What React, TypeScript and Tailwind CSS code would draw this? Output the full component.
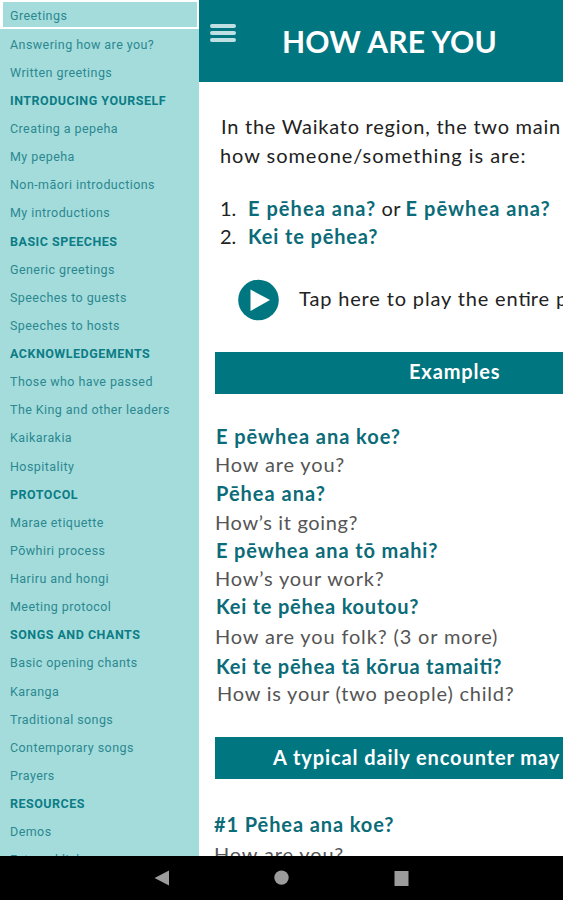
import React from 'react';

interface MenuItem {
  label: string;
  heading?: boolean;
}

interface Phrase {
  maori: React.ReactNode;
  english: string;
  maoriClass: string;
  englishClass: string;
}

const menuItems: MenuItem[] = [
  { label: 'Answering how are you?' },
  { label: 'Written greetings' },
  { label: 'INTRODUCING YOURSELF', heading: true },
  { label: 'Creating a pepeha' },
  { label: 'My pepeha' },
  { label: 'Non-māori introductions' },
  { label: 'My introductions' },
  { label: 'BASIC SPEECHES', heading: true },
  { label: 'Generic greetings' },
  { label: 'Speeches to guests' },
  { label: 'Speeches to hosts' },
  { label: 'ACKNOWLEDGEMENTS', heading: true },
  { label: 'Those who have passed' },
  { label: 'The King and other leaders' },
  { label: 'Kaikarakia' },
  { label: 'Hospitality' },
  { label: 'PROTOCOL', heading: true },
  { label: 'Marae etiquette' },
  { label: 'Pōwhiri process' },
  { label: 'Hariru and hongi' },
  { label: 'Meeting protocol' },
  { label: 'SONGS AND CHANTS', heading: true },
  { label: 'Basic opening chants' },
  { label: 'Karanga' },
  { label: 'Traditional songs' },
  { label: 'Contemporary songs' },
  { label: 'Prayers' },
  { label: 'RESOURCES', heading: true },
  { label: 'Demos' },
  { label: 'External links' },
];

// Letter spacing turns ligatures off, so the "ti" pair gets its own unspaced span
const Ti: React.FC = () => <span className="tracking-normal">ti</span>;

const phrases: Phrase[] = [
  { maori: 'E pēwhea ana koe?', english: 'How are you?', maoriClass: 'h-[29px] tracking-[0.95px]', englishClass: 'h-[28px] tracking-[0.85px]' },
  { maori: 'Pēhea ana?', english: 'How’s it going?', maoriClass: 'h-[29px] tracking-[1px]', englishClass: 'h-[29px] tracking-[0.65px]' },
  { maori: 'E pēwhea ana tō mahi?', english: 'How’s your work?', maoriClass: 'h-[28px] tracking-[0.88px]', englishClass: 'h-[28px] tracking-[0.83px]' },
  { maori: 'Kei te pēhea koutou?', english: 'How are you folk? (3 or more)', maoriClass: 'h-[28px] tracking-[0.78px]', englishClass: 'h-[31px] tracking-[0.85px]' },
  { maori: <span>Kei te pēhea tā kōrua tamai<Ti />?</span>, english: 'How is your (two people) child?', maoriClass: 'h-[30px] tracking-[0.76px]', englishClass: 'h-[24px] pl-[2px] tracking-[0.78px]' },
];

const Sidebar: React.FC = () => (
  <nav className="w-[199px] shrink-0 overflow-hidden bg-[#a3dcdb] font-['Roboto',sans-serif] text-[12.5px] tracking-[0.43px] text-[#2c8890]">
    <div className="flex h-[29px] items-center border-2 border-l-[3px] border-white pt-[4px] pl-[7px]">
      Greetings
    </div>
    <div className="mt-[2px]">
      {menuItems.map(item => (
        <div
          key={item.label}
          className={`flex h-[28.13px] items-center pl-[10px] whitespace-nowrap ${item.heading ? 'font-bold tracking-[0.5px] text-[#0c7c86]' : ''}`}
        >
          {item.label}
        </div>
      ))}
    </div>
  </nav>
);

const Header: React.FC = () => (
  <header className="flex h-[82px] shrink-0 items-center bg-[#007681]">
    <button className="ml-[11px] flex w-[26px] flex-col gap-[3px] pb-[16px]" aria-label="Menu">
      <span className="h-1 w-full rounded-full bg-[#bfe0e2]" />
      <span className="h-1 w-full rounded-full bg-[#bfe0e2]" />
      <span className="h-1 w-full rounded-full bg-[#bfe0e2]" />
    </button>
    <h1 className="ml-[46px] text-[30px] font-bold tracking-[0.2px] whitespace-nowrap text-white">HOW ARE YOU</h1>
  </header>
);

const App: React.FC = () => {
  return (
    <div className="flex h-[900px] w-[563px] flex-col overflow-hidden bg-white font-['Lato',sans-serif]">
      <div className="flex min-h-0 flex-1">
        <Sidebar />
        <main className="flex min-w-0 flex-1 flex-col overflow-hidden text-[20px] whitespace-nowrap text-[#222]">
          <Header />
          <div className="mt-[30px] shrink-0 pl-[21px] leading-[29px]">
            <p className="pl-px tracking-[0.75px]">In the Waikato region, the two main</p>
            <p className="tracking-[0.95px]">how someone/something is are:</p>
          </div>
          <ol className="mt-[24px] shrink-0 pl-[21px] leading-[28px]">
            <li className="flex">
              <span className="w-[28px]">1.</span>
              <span className="tracking-[1.05px]">
                <b className="text-[#0b6b78]">E pēhea ana?</b>
                <span className="tracking-[0.2px]"> or </span>
                <b className="text-[#0b6b78]">E pēwhea ana?</b>
              </span>
            </li>
            <li className="flex">
              <span className="w-[28px]">2.</span>
              <b className="tracking-[0.85px] text-[#0b6b78]">Kei te pēhea?</b>
            </li>
          </ol>
          <div className="mt-[29px] flex h-[42px] shrink-0 items-center pl-[39px]">
            <svg className="size-[42px] shrink-0" viewBox="0 0 42 42">
              <circle cx="20.5" cy="21" r="20.3" fill="#007681" />
              <path d="M12.5 10.5L32 21L12.5 32Z" fill="#fff" />
            </svg>
            <span className="ml-[19px] pb-[4px] tracking-[0.85px]">Tap here to play the en<Ti />re phrase</span>
          </div>
          <h2 className="mt-[31px] ml-4 flex h-[42px] shrink-0 items-center bg-[#007681] pb-[4px] pl-[194px] font-bold tracking-[0.85px] text-white">
            Examples
          </h2>
          <div className="mt-[27px] shrink-0 pl-[16px]">
            {phrases.map(phrase => (
              <React.Fragment key={phrase.english}>
                <p className={`flex items-center pl-px font-bold text-[#0b6b78] ${phrase.maoriClass}`}>{phrase.maori}</p>
                <p className={`flex items-center text-[#555] ${phrase.englishClass}`}>{phrase.english}</p>
              </React.Fragment>
            ))}
          </div>
          <h2 className="mt-[32px] ml-4 flex h-[42px] shrink-0 items-center bg-[#007681] pb-[2px] pl-[58px] font-bold tracking-[0.9px] text-white">
            A typical daily encounter may
          </h2>
          <div className="mt-[30px] shrink-0 pl-[15px] leading-[30px]">
            <p className="font-bold tracking-[0.9px] text-[#0b6b78]">#1 Pēhea ana koe?</p>
            <p className="tracking-[0.85px] text-[#555]">How are you?</p>
          </div>
        </main>
      </div>
      <footer className="flex h-[44px] shrink-0 items-center bg-black pl-[154px]">
        <svg className="h-4 w-[260px]" viewBox="0 0 260 16" fill="#9c9c9c">
          <path d="M0.5 8L15 0.5V15.5Z" />
          <circle cx="127.5" cy="7.6" r="7.2" />
          <rect x="240.5" y="1" width="14" height="15" />
        </svg>
      </footer>
    </div>
  );
};

export default App;
